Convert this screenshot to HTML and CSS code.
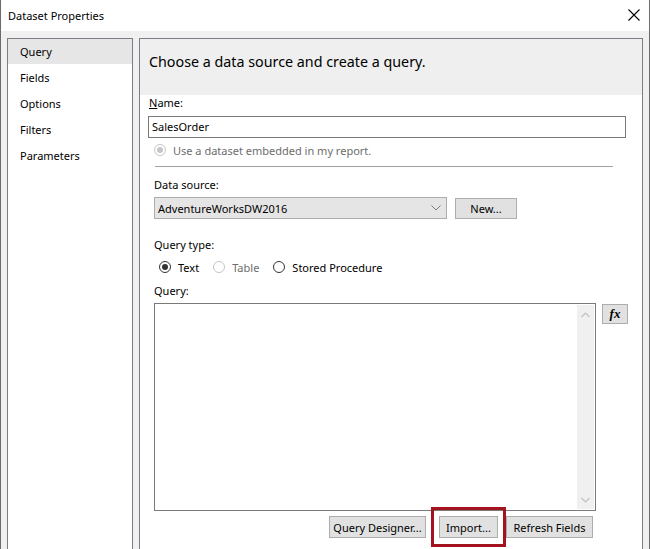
FILE: index.html
```html
<!DOCTYPE html>
<html>
<head>
<meta charset="utf-8">
<link rel="stylesheet" href="styles.css">
</head>
<body>
<div class="window">
  <div class="titlebar">
    <span class="title">Dataset Properties</span>
    <svg class="close" width="12" height="12" viewBox="0 0 12 12"><path d="M0.5 0.5 L11.5 11.5 M11.5 0.5 L0.5 11.5" stroke="#000" stroke-width="1.1" fill="none"/></svg>
  </div>
  <div class="body">
    <nav class="nav">
      <div class="nav-item selected">Query</div>
      <div class="nav-item">Fields</div>
      <div class="nav-item">Options</div>
      <div class="nav-item">Filters</div>
      <div class="nav-item">Parameters</div>
    </nav>
    <section class="panel">
      <div class="panel-head">Choose a data source and create a query.</div>
      <div class="panel-body">
        <div class="label name-label"><u>N</u>ame:</div>
        <div class="textbox">SalesOrder</div>
        <div class="radio-row embed">
          <span class="radio disabled checked"></span><span class="disabled-text">Use a dataset embedded in my report.</span>
        </div>
        <div class="rule"></div>
        <div class="label ds-label">Data source:</div>
        <div class="ds-row">
          <div class="select">
            <span>AdventureWorksDW2016</span>
            <svg width="10" height="6" viewBox="0 0 10 6"><path d="M0.5 0.5 L5 5 L9.5 0.5" stroke="#7a7a7a" stroke-width="1" fill="none"/></svg>
          </div>
          <div class="btn new-btn">New...</div>
        </div>
        <div class="label qt-label">Query type:</div>
        <div class="radio-row types">
          <span class="radio checked"></span><span class="opt">Text</span>
          <span class="radio disabled"></span><span class="opt disabled-text">Table</span>
          <span class="radio"></span><span class="opt">Stored Procedure</span>
        </div>
        <div class="label q-label">Query:</div>
        <div class="query-row">
          <div class="textarea">
            <div class="scroll">
              <svg width="9" height="6" viewBox="0 0 9 6"><path d="M0.5 5 L4.5 1 L8.5 5" stroke="#c2c2c2" stroke-width="1.2" fill="none"/></svg>
              <svg width="9" height="6" viewBox="0 0 9 6"><path d="M0.5 1 L4.5 5 L8.5 1" stroke="#c2c2c2" stroke-width="1.2" fill="none"/></svg>
            </div>
          </div>
          <div class="btn fx-btn">fx</div>
        </div>
        <div class="button-row">
          <div class="btn qd-btn">Query Designer...</div>
          <div class="highlight"><div class="btn imp-btn">Import...</div></div>
          <div class="btn rf-btn">Refresh Fields</div>
        </div>
      </div>
    </section>
  </div>
</div>
</body>
</html>
```
FILE: styles.css
```css
html, body {
  margin: 0;
  padding: 0;
  background: #f0f0f0;
}
body {
  font-family: "Noto Sans", "Open Sans", sans-serif;
  font-size: 11px;
  color: #000;
  white-space: nowrap;
}
.window {
  width: 650px;
  height: 549px;
  box-sizing: border-box;
  border-left: 1px solid #6b6b6b;
  border-right: 1px solid #6b6b6b;
  overflow: hidden;
  background: #f0f0f0;
}
.titlebar {
  height: 31px;
  background: #fff;
  display: flex;
  align-items: center;
  justify-content: space-between;
  padding: 0 9px 0 7px;
}
.title {
  font-size: 11px;
  line-height: 16px;
  margin-top: 1px;
}
.close {
  display: block;
  margin-top: -1px;
}
.body {
  display: flex;
  gap: 6px;
  padding: 7px 6px 0 6px;
}
.nav {
  width: 126px;
  height: 540px;
  flex: none;
  box-sizing: border-box;
  border: 1px solid #7a7e85;
  background: #fff;
}
.nav-item {
  height: 26px;
  line-height: 26px;
  padding-left: 12px;
}
.nav-item.selected {
  background: #e6e6e6;
  height: 25px;
  line-height: 25px;
}
.nav-item.selected + .nav-item { margin-top: 1px; }
.panel {
  width: 504px;
  height: 540px;
  flex: none;
  box-sizing: border-box;
  border: 1px solid #7a7e85;
  background: #fff;
}
.panel-head {
  height: 56px;
  box-sizing: border-box;
  background: #efefef;
  font-size: 14.3px;
  line-height: 20px;
  padding: 13px 0 0 9px;
}
.panel-body {
  padding-left: 14px;
}
.label {
  height: 16px;
  line-height: 16px;
}
.name-label { margin-left: -5px; }
.textbox {
  margin: 5px 0 0 -6px;
  width: 478px;
  height: 22px;
  box-sizing: border-box;
  border: 1px solid #7a7a7a;
  line-height: 20px;
  padding-left: 3px;
}
.radio-row {
  display: flex;
  align-items: center;
  height: 16px;
}
.embed { margin-top: 4px; }
.radio {
  width: 12px;
  height: 12px;
  box-sizing: border-box;
  border: 1px solid #333;
  border-radius: 50%;
  background: #fff;
  position: relative;
  flex: none;
}
.radio.checked::after {
  content: "";
  position: absolute;
  left: 2px;
  top: 2px;
  width: 6px;
  height: 6px;
  border-radius: 50%;
  background: #333;
}
.radio.disabled {
  border-color: #c6c6c6;
}
.radio.disabled.checked::after { background: #c6c6c6; }
.embed .radio { margin-right: 7px; }
.disabled-text { color: #6d6d6d; }
.rule {
  margin: 8px 0 0 1px;
  width: 458px;
  height: 1px;
  background: #a0a0a0;
}
.ds-label { margin-top: 10px; }
.ds-row {
  display: flex;
  margin-top: 4px;
  gap: 8px;
}
.select {
  width: 293px;
  height: 22px;
  box-sizing: border-box;
  background: #e5e5e5;
  border: 1px solid #adadad;
  display: flex;
  align-items: center;
  justify-content: space-between;
  padding: 0 5px 0 3px;
}
.btn {
  height: 22px;
  box-sizing: border-box;
  background: #e1e1e1;
  border: 1px solid #adadad;
  display: flex;
  align-items: center;
  justify-content: center;
}
.new-btn { width: 62px; margin-top: 1px; height: 21px; }
.qt-label { margin-top: 18px; }
.types { margin-top: 6px; padding-left: 5px; }
.types .radio { margin-right: 7px; }
.types .opt { margin-right: 14px; }
.q-label { margin-top: 8px; }
.query-row {
  display: flex;
  margin-top: 4px;
  gap: 6px;
  align-items: flex-start;
}
.textarea {
  width: 442px;
  height: 208px;
  box-sizing: border-box;
  border: 1px solid #7a7a7a;
  display: flex;
  justify-content: flex-end;
  padding: 1px;
}
.scroll {
  width: 17px;
  background: #f0f0f0;
  display: flex;
  flex-direction: column;
  justify-content: space-between;
  align-items: center;
  padding: 7px 0 6px;
}
.scroll svg { display: block; }
.fx-btn {
  width: 26px;
  height: 20px;
  margin-top: 1px;
  font-family: "Liberation Serif", "DejaVu Serif", serif;
  font-style: italic;
  font-weight: bold;
  font-size: 13px;
}
.button-row {
  display: flex;
  margin-top: 5px;
  padding-left: 175px;
}
.qd-btn { width: 97px; }
.highlight {
  position: relative;
  margin-left: 13px;
}
.highlight::after {
  content: "";
  position: absolute;
  left: -8px;
  right: -8px;
  top: -9px;
  bottom: -9px;
  border: 3px solid #a3141e;
}
.imp-btn { width: 59px; }
.rf-btn { width: 87px; margin-left: 8px; }
```
